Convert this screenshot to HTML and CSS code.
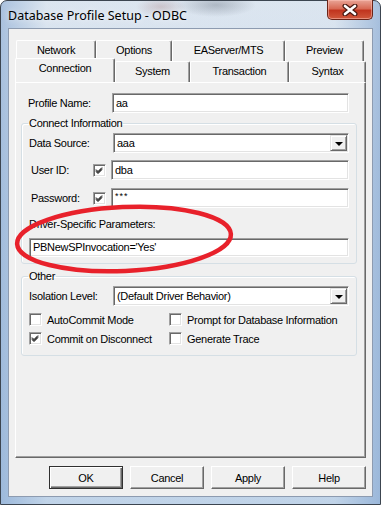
FILE: index.html
```html
<!DOCTYPE html>
<html lang="en">
<head>
  <meta charset="UTF-8">
  <title>Database Profile Setup - ODBC</title>
  <link rel="stylesheet" href="styles.css">
</head>
<body>
  <div class="window">
    <div class="titlebar">
      <span class="title">Database Profile Setup - ODBC</span>
      <span class="close">
        <svg width="16" height="12" viewBox="0 0 16 12">
          <path d="M3 2 L13 10 M13 2 L3 10" stroke="#4a1a12" stroke-width="5" stroke-linecap="round"/>
          <path d="M3 2 L13 10 M13 2 L3 10" stroke="#fff" stroke-width="2.6" stroke-linecap="round"/>
        </svg>
      </span>
    </div>

    <div class="client">
      <!-- tab strip, back row then front row -->
      <div class="tab-row back">
        <div class="tab w-network">Network</div>
        <div class="tab w-options">Options</div>
        <div class="tab w-easerver">EAServer/MTS</div>
        <div class="tab w-preview">Preview</div>
      </div>
      <div class="tab-row front">
        <div class="tab selected w-connection">Connection</div>
        <div class="tab w-system">System</div>
        <div class="tab w-transaction">Transaction</div>
        <div class="tab w-syntax">Syntax</div>
      </div>

      <div class="panel">
        <div class="row profile">
          <label class="lbl">Profile Name:</label>
          <div class="edit">aa</div>
        </div>

        <fieldset class="group connect">
          <legend>Connect Information</legend>
          <div class="row first">
            <label class="lbl">Data Source:</label>
            <div class="combo">
              <span class="combo-text">aaa</span>
              <span class="drop"><i class="arrow"></i></span>
            </div>
          </div>
          <div class="row">
            <label class="lbl short">User ID:</label>
            <span class="check on"></span>
            <div class="edit">dba</div>
          </div>
          <div class="row pass">
            <label class="lbl short">Password:</label>
            <span class="check on"></span>
            <div class="edit pwd">***</div>
          </div>
          <div class="params-label">Driver-Specific Parameters:</div>
          <div class="edit wide">PBNewSPInvocation='Yes'</div>
        </fieldset>

        <fieldset class="group other">
          <legend>Other</legend>
          <div class="row first">
            <label class="lbl">Isolation Level:</label>
            <div class="combo">
              <span class="combo-text">(Default Driver Behavior)</span>
              <span class="drop"><i class="arrow"></i></span>
            </div>
          </div>
          <div class="checks">
            <div class="opt"><span class="check"></span>AutoCommit Mode</div>
            <div class="opt"><span class="check"></span>Prompt for Database Information</div>
            <div class="opt"><span class="check on"></span>Commit on Disconnect</div>
            <div class="opt"><span class="check"></span>Generate Trace</div>
          </div>
        </fieldset>

        <svg class="circle" width="240" height="90" viewBox="0 0 240 90">
          <ellipse cx="110" cy="44" rx="107" ry="32" transform="rotate(-2.6 110 44)"
                   fill="none" stroke="#e8212b" stroke-width="4.5"/>
        </svg>
      </div>

      <div class="buttons">
        <button class="btn default">OK</button>
        <button class="btn">Cancel</button>
        <button class="btn">Apply</button>
        <button class="btn">Help</button>
      </div>
    </div>
  </div>
</body>
</html>
```

FILE: styles.css
```css
html,
body {
  margin: 0;
  padding: 0;
}
body {
  width: 381px;
  height: 505px;
  overflow: hidden;
  background: #fff;
  font-family: "Liberation Sans", Arial, sans-serif;
  font-size: 11px;
  letter-spacing: -0.3px;
  color: #000;
}
.window {
  box-sizing: border-box;
  width: 381px;
  height: 505px;
  display: flex;
  flex-direction: column;
  padding: 0 7px 7px 7px;
  border: 1px solid #3c4550;
  border-radius: 7px 7px 0 0;
  background:
    radial-gradient(ellipse 40px 12px at 215px 4px, rgba(90, 100, 115, 0.35), transparent),
    radial-gradient(ellipse 25px 10px at 160px 6px, rgba(150, 90, 90, 0.25), transparent),
    linear-gradient(to right, rgba(140, 172, 212, 0.6), rgba(230, 238, 246, 0.2) 12%, rgba(230, 238, 246, 0.2) 88%, rgba(140, 172, 212, 0.65)),
    linear-gradient(to bottom, #d9e3ee, #c6d7e9 40%, #b7cde5);
}
.titlebar {
  height: 27px;
  display: flex;
  align-items: flex-start;
}
.title {
  font-family: "Noto Sans", "Open Sans", sans-serif;
  font-size: 12.5px;
  letter-spacing: 0;
  line-height: 16px;
  padding-top: 7px;
  color: #000;
  text-shadow: 0 0 6px rgba(255, 255, 255, 0.9);
}
.close {
  margin-left: auto;
  margin-top: -1px;
  width: 44px;
  height: 19px;
  display: flex;
  align-items: center;
  justify-content: center;
  border: 1px solid #6b2418;
  border-top: none;
  border-radius: 0 0 5px 5px;
  background: linear-gradient(to bottom, #e9a597, #d86a55 45%, #c1351f 55%, #d0583c);
  box-shadow: inset 0 0 0 1px rgba(255, 200, 190, 0.5);
}
.client {
  flex: 1;
  display: flex;
  flex-direction: column;
  background: #f0f0f0;
  border: 1px solid #8d9bb0;
  padding: 11px 6px 7px 6px;
}

/* tabs */
.tab-row {
  display: flex;
  height: 21px;
}
.tab-row.back {
  padding-left: 1px;
}
.tab {
  box-sizing: border-box;
  height: 21px;
  border-top: 1px solid #fff;
  border-left: 1px solid #fff;
  border-right: 1px solid #696969;
  border-radius: 2px 2px 0 0;
  box-shadow: inset -1px 0 #a0a0a0;
  background: #f0f0f0;
  text-align: center;
  line-height: 19px;
}
.tab.selected {
  height: 24px;
  margin-top: -3px;
  margin-bottom: -1px;
  line-height: 18px;
  position: relative;
  z-index: 1;
}
.w-network { width: 80px; }
.w-options { width: 76px; }
.w-easerver { width: 113px; }
.w-preview { width: 79px; }
.w-connection { width: 100px; }
.w-system { width: 75px; }
.w-transaction { width: 99px; }
.w-syntax { width: 77px; }

.panel {
  position: relative;
  flex: 1;
  border-top: 1px solid #fff;
  border-left: 1px solid #fff;
  border-right: 1px solid #696969;
  border-bottom: 1px solid #696969;
  box-shadow: inset -1px -1px #a0a0a0;
  padding: 10px 8px 0 5px;
}

/* rows and fields */
.row {
  display: flex;
  align-items: center;
  height: 20px;
}
.row.profile {
  padding: 0 8px 0 7px;
}
.lbl {
  width: 84px;
  flex: none;
}
.lbl.short {
  width: 62px;
  padding-left: 2px;
}
.edit,
.combo {
  box-sizing: border-box;
  flex: 1;
  height: 20px;
  background: #fff;
  border: 1px solid;
  border-color: #a0a0a0 #fff #fff #a0a0a0;
  box-shadow: inset 1px 1px #696969, inset -1px -1px #e3e3e3;
  padding: 0 3px;
  line-height: 18px;
  white-space: nowrap;
}
.edit.pwd {
  font-size: 9px;
  letter-spacing: 1px;
  line-height: 14px;
}
.edit.wide {
  flex: none;
  height: 19px;
  line-height: 17px;
  margin-top: 7px;
}
.combo {
  display: flex;
  align-items: center;
  padding: 0 1px 0 3px;
}
.combo-text {
  flex: 1;
}
.drop {
  box-sizing: border-box;
  width: 17px;
  height: 16px;
  display: flex;
  align-items: center;
  justify-content: center;
  background: #f0f0f0;
  border: 1px solid;
  border-color: #e3e3e3 #696969 #696969 #e3e3e3;
  box-shadow: inset 1px 1px #fff, inset -1px -1px #a0a0a0;
}
.arrow {
  width: 0;
  height: 0;
  border-left: 4px solid transparent;
  border-right: 4px solid transparent;
  border-top: 4px solid #000;
  margin-top: 1px;
}

/* check boxes */
.check {
  box-sizing: border-box;
  flex: none;
  width: 13px;
  height: 13px;
  background: #fff;
  border: 1px solid;
  border-color: #a0a0a0 #fff #fff #a0a0a0;
  box-shadow: inset 1px 1px #696969, inset -1px -1px #e3e3e3;
  margin-right: 5px;
}
.check.on {
  background: #fff url("data:image/svg+xml;utf8,<svg xmlns='http://www.w3.org/2000/svg' width='11' height='11'><path d='M2 4.5 L4 6.5 L8 2.5 M2 5.5 L4 7.5 L8 3.5 M2 6.5 L4 8.5 L8 4.5' stroke='black' fill='none'/></svg>") no-repeat 0 0;
}

/* group boxes */
.group {
  margin: 4px 0 0 0;
  padding: 0 7px 6px 7px;
  border: 1px solid #d5dfe5;
  border-radius: 3px;
  box-shadow: inset 1px 1px #fff;
}
.group legend {
  padding: 0 1px;
  margin-left: -1px;
  line-height: 13px;
}
.group .row {
  margin-top: 7px;
}
.group .row.first {
  margin-top: 3px;
}
.group .row.pass {
  margin-top: 8px;
}
.params-label {
  margin-top: 10px;
  line-height: 13px;
}
.group.other {
  margin-top: 6px;
  padding-bottom: 10px;
}
.checks {
  display: grid;
  grid-template-columns: 140px 1fr;
  row-gap: 6px;
  margin-top: 7px;
}
.opt {
  display: flex;
  align-items: center;
  height: 13px;
  white-space: nowrap;
}

.circle {
  position: absolute;
  left: -2px;
  top: 112px;
}

/* buttons */
.buttons {
  display: flex;
  justify-content: flex-end;
  gap: 7px;
  margin-top: 8px;
}
.btn {
  box-sizing: border-box;
  width: 74px;
  height: 23px;
  font-family: "Liberation Sans", Arial, sans-serif;
  font-size: 11px;
  letter-spacing: -0.3px;
  color: #000;
  background: #f0f0f0;
  border: 1px solid;
  border-color: #fff #696969 #696969 #fff;
  box-shadow: inset -1px -1px #a0a0a0;
  padding: 0;
}
.btn.default {
  border: 1px solid #303030;
  box-shadow: inset 1px 1px #fff, inset -1px -1px #696969, inset -2px -2px #a0a0a0;
}
```
